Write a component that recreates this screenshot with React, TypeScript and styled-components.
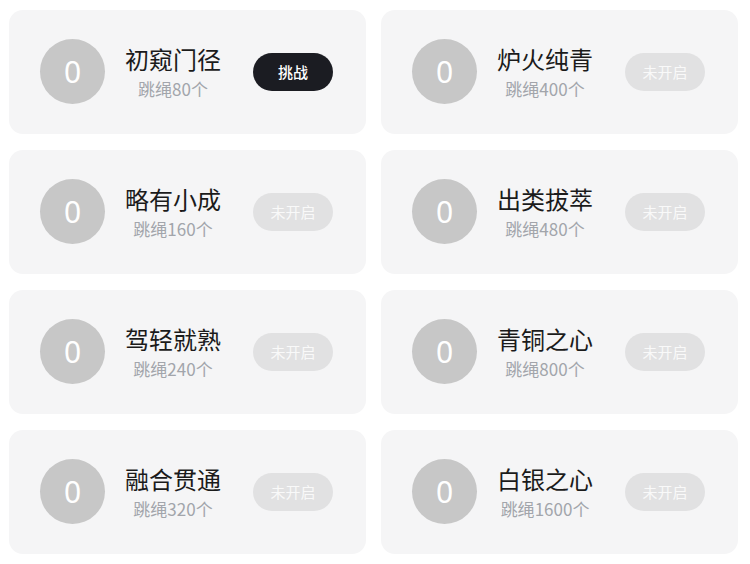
import React from "react";
import styled, { createGlobalStyle } from "styled-components";

const Global = createGlobalStyle`
  html, body { margin: 0; padding: 0; background: #ffffff; }
  body { font-family: "Noto Sans CJK SC", "Noto Sans", sans-serif; }
`;

const Grid = styled.div`
  display: grid;
  grid-template-columns: 357px 357px;
  grid-auto-rows: 123.5px;
  column-gap: 15px;
  row-gap: 16.5px;
  padding: 10px 0 0 9px;
`;

const Card = styled.div`
  display: flex;
  align-items: center;
  background: #f5f5f6;
  border-radius: 14px;
  padding-left: 31px;
  box-sizing: border-box;
`;

const Badge = styled.div`
  width: 65px;
  height: 65px;
  border-radius: 50%;
  background: #c7c7c7;
  color: #ffffff;
  display: flex;
  align-items: center;
  justify-content: center;
  font-family: "Noto Sans", sans-serif;
  font-size: 30px;
  flex-shrink: 0;
`;

const Info = styled.div`
  display: flex;
  flex-direction: column;
  align-items: center;
  gap: 7px;
  margin-left: 20px;
  padding-top: 2px;
`;

const Title = styled.div`
  font-size: 24px;
  line-height: 26px;
  color: #1b1b1b;
`;

const Sub = styled.div`
  font-size: 17px;
  line-height: 20px;
  color: #a2a5ab;
`;

const Action = styled.div<{ $active: boolean }>`
  margin-left: 32px;
  width: 80px;
  height: 38px;
  border-radius: 19px;
  display: flex;
  align-items: center;
  justify-content: center;
  font-size: 15px;
  background: ${(p) => (p.$active ? "#1b1c22" : "#e1e1e2")};
  color: ${(p) => (p.$active ? "#ffffff" : "#f9f9f9")};
  font-weight: ${(p) => (p.$active ? 500 : 400)};
`;

const items = [
  { title: "初窥门径", count: 80, active: true },
  { title: "炉火纯青", count: 400 },
  { title: "略有小成", count: 160 },
  { title: "出类拔萃", count: 480 },
  { title: "驾轻就熟", count: 240 },
  { title: "青铜之心", count: 800 },
  { title: "融合贯通", count: 320 },
  { title: "白银之心", count: 1600 },
];

export default function App() {
  return (
    <>
      <Global />
      <Grid>
        {items.map((it) => (
          <Card key={it.title}>
            <Badge>0</Badge>
            <Info>
              <Title>{it.title}</Title>
              <Sub>跳绳{it.count}个</Sub>
            </Info>
            <Action $active={!!it.active}>{it.active ? "挑战" : "未开启"}</Action>
          </Card>
        ))}
      </Grid>
    </>
  );
}
